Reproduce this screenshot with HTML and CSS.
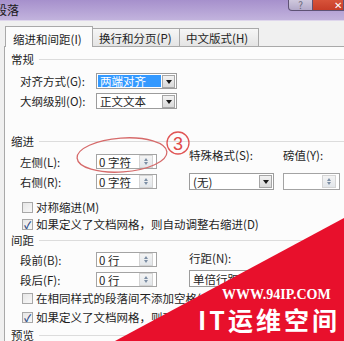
FILE: index.html
```html
<!DOCTYPE html>
<html lang="zh-CN">
<head>
    <meta charset="UTF-8">
    <title>段落</title>
    <link rel="stylesheet" href="styles.css">
</head>
<body>
  <div class="dialog">
    <div class="titlebar">
        <span class="title">段落</span>
        <div class="caption">
            <span class="cap-help">?</span>
            <span class="cap-close">✕</span>
        </div>
    </div>

    <!-- tab strip -->
    <div class="tabs">
        <div class="tab active">缩进和间距(<u>I</u>)</div>
        <div class="tab">换行和分页(<u>P</u>)</div>
        <div class="tab">中文版式(<u>H</u>)</div>
    </div>

    <div class="panel">
        <div class="group">常规</div>
        <div class="field first">
            <label>对齐方式(<u>G</u>):</label>
            <div class="select"><span class="sel-text hl">两端对齐</span><span class="drop"></span></div>
        </div>
        <div class="field">
            <label>大纲级别(<u>O</u>):</label>
            <div class="select"><span class="sel-text">正文文本</span><span class="drop"></span></div>
        </div>

        <!-- indent -->
        <div class="group g-indent">缩进</div>
        <div class="block">
            <div class="block-left">
                <div class="field">
                    <label>左侧(<u>L</u>):</label>
                    <div class="spin"><span>0 字符</span><span class="arrows"><i></i><i class="down"></i></span></div>
                </div>
                <div class="field">
                    <label>右侧(<u>R</u>):</label>
                    <div class="spin"><span>0 字符</span><span class="arrows"><i></i><i class="down"></i></span></div>
                </div>
            </div>
            <div class="block-right">
                <div class="col">
                    <label>特殊格式(<u>S</u>):</label>
                    <div class="select wide"><span class="sel-text">(无)</span><span class="drop"></span></div>
                </div>
                <div class="col col-small">
                    <label>磅值(<u>Y</u>):</label>
                    <div class="spin small"><span></span><span class="arrows"><i></i><i class="down"></i></span></div>
                </div>
            </div>
        </div>
        <div class="check c-sym"><span class="box"></span>对称缩进(<u>M</u>)</div>
        <div class="check c-tight"><span class="box on">✓</span>如果定义了文档网格，则自动调整右缩进(<u>D</u>)</div>

        <!-- spacing -->
        <div class="group g-space">间距</div>
        <div class="block b-space">
            <div class="block-left">
                <div class="field">
                    <label>段前(<u>B</u>):</label>
                    <div class="spin"><span>0 行</span><span class="arrows"><i></i><i class="down"></i></span></div>
                </div>
                <div class="field">
                    <label>段后(<u>F</u>):</label>
                    <div class="spin"><span>0 行</span><span class="arrows"><i></i><i class="down"></i></span></div>
                </div>
            </div>
            <div class="block-right">
                <div class="col">
                    <label>行距(<u>N</u>):</label>
                    <div class="select wide"><span class="sel-text">单倍行距</span><span class="drop"></span></div>
                </div>
                <div class="col col-small">
                    <label>设置值(<u>A</u>):</label>
                    <div class="spin small"><span></span><span class="arrows"><i></i><i class="down"></i></span></div>
                </div>
            </div>
        </div>
        <div class="check c-same"><span class="box"></span>在相同样式的段落间不添加空格(<u>C</u>)</div>
        <div class="check c-grid"><span class="box on">✓</span>如果定义了文档网格，则对齐到网格(<u>W</u>)</div>

        <div class="group g-preview">预览</div>
    </div>

    <!-- annotation drawn over the dialog -->
    <svg class="annot" width="344" height="341" viewBox="0 0 344 341">
        <ellipse cx="122" cy="155" rx="45" ry="17" fill="none" stroke="#d66a6a" stroke-width="1.3" transform="rotate(-4 122 155)"/>
        <circle cx="178" cy="143" r="11" fill="none" stroke="#e05454" stroke-width="1.3"/>
        <text x="178" y="150" text-anchor="middle" class="annot-num">3</text>
    </svg>

    <!-- watermark -->
    <svg class="mark" width="344" height="341" viewBox="0 0 344 341">
        <polygon points="115,341 344,218 344,341" fill="#e8102c"/>
    </svg>
    <div class="wm-url">WWW.94IP.COM</div>
    <div class="wm-name">IT运维空间</div>
  </div>
</body>
</html>
```

FILE: styles.css
```css
body {
    margin: 0;
    font-family: "Noto Sans CJK SC", "Liberation Sans", sans-serif;
    font-size: 11.5px;
    color: #1e1e1e;
    line-height: 14px;
}

u {
    text-decoration: none;
}

.dialog {
    position: relative;
    width: 344px;
    height: 341px;
    overflow: hidden;
    background-color: #f0f0f0;
}

/* title bar */
.titlebar {
    height: 20px;
    display: flex;
    align-items: flex-start;
    justify-content: space-between;
    background: linear-gradient(#a690cc, #c2b3dd);
    border-bottom: 1px solid #ded6ec;
}
.title {
    margin: 3px 0 0 -5px;
    font-size: 12px;
    color: #1a1a1a;
}
.caption {
    display: flex;
    height: 11px;
}
.cap-help, .cap-close {
    height: 11px;
    line-height: 10px;
    font-size: 10px;
    text-align: center;
    border: 1px solid #5e5275;
    border-top: none;
    box-sizing: border-box;
}
.cap-help {
    width: 25px;
    color: #6a6a7a;
    background: linear-gradient(#cfc8dd, #b3a9c9);
    border-radius: 0 0 0 4px;
}
.cap-close {
    width: 31px;
    color: #ffffff;
    text-align: right;
    padding-right: 1px;
    background: linear-gradient(#d7533a, #c73d28);
    border-left: none;
}

/* tabs */
.tabs {
    display: flex;
    align-items: flex-end;
    height: 25px;
    padding-left: 5px;
}
.tab {
    height: 18px;
    box-sizing: border-box;
    padding: 2px 7px 0 6px;
    border: 1px solid #a9a9a9;
    border-bottom: none;
    border-left: none;
    background: linear-gradient(#f6f6f6, #e4e4e4);
}
.tab.active {
    position: relative;
    z-index: 1;
    height: 21px;
    margin-bottom: -1px;
    width: 88px;
    padding: 5px 0 0 7px;
    border-left: 1px solid #a9a9a9;
    background: #fcfcfc;
}
.tab:nth-child(2) {
    width: 87px;
}
.tab:nth-child(3) {
    width: 79px;
}

/* panel */
.panel {
    border-top: 1px solid #a9a9a9;
    border-left: 1px solid #a9a9a9;
    margin-left: 4px;
    background: #fcfcfc;
    padding-left: 6px;
    height: 300px;
}

.group {
    display: flex;
    align-items: center;
    height: 14px;
    margin-top: 5px;
}
.group::after {
    content: "";
    flex: 1;
    height: 1px;
    margin-left: 5px;
    background: #dcdcdc;
}
.g-indent {
    margin-top: 25px;
}
.g-space {
    margin-top: 2px;
}
.g-preview {
    margin-top: 4px;
}

.field {
    display: flex;
    align-items: center;
    margin-left: 9px;
    margin-top: 4px;
    height: 16px;
}
.field.first {
    margin-top: 7px;
}
.field label {
    width: 76px;
}

.select {
    display: flex;
    align-items: center;
    width: 81px;
    height: 16px;
    box-sizing: border-box;
    border: 1px solid #9c9c9c;
    background: #ffffff;
    padding: 1px;
}
.select.wide {
    width: 85px;
    height: 17px;
}
.sel-text {
    flex: 1;
    padding-left: 2px;
    height: 12px;
    line-height: 12px;
}
.sel-text.hl {
    background: #3399ff;
    color: #ffffff;
    margin-right: 1px;
}
.drop {
    width: 13px;
    height: 13px;
    box-sizing: border-box;
    border: 1px solid #a6a6a6;
    background: linear-gradient(#f2f2f2, #d9d9d9);
    position: relative;
}
.drop::after {
    content: "";
    position: absolute;
    left: 3px;
    top: 4px;
    border-left: 3px solid transparent;
    border-right: 3px solid transparent;
    border-top: 4px solid #1a1a1a;
}

.spin {
    display: flex;
    align-items: center;
    width: 61px;
    height: 15px;
    box-sizing: border-box;
    border: 1px solid #a4a4a4;
    background: #ffffff;
    padding-left: 2px;
}
.spin.small {
    width: 57px;
    height: 17px;
}
.spin span:first-child {
    flex: 1;
}
.arrows {
    display: flex;
    flex-direction: column;
    justify-content: center;
    gap: 1px;
    width: 12px;
    height: 11px;
    margin-right: 3px;
    background: linear-gradient(#f4f4f4, #e2e6ea);
    border: 1px solid #d4d4d4;
    align-items: center;
}
.arrows i {
    display: block;
    border-left: 2px solid transparent;
    border-right: 2px solid transparent;
    border-bottom: 3px solid #7c8ea4;
}
.arrows i.down {
    border-bottom: none;
    border-top: 3px solid #7c8ea4;
}

/* two-column control blocks */
.block {
    display: flex;
    height: 42px;
}
.block-left {
    width: 169px;
    margin-left: 9px;
    padding-top: 2px;
}
.block-left .field {
    margin-left: 0;
    margin-top: 4px;
    height: 15px;
}
.block-left .field + .field {
    margin-top: 5px;
}
.block-right {
    display: flex;
}
.col {
    display: flex;
    flex-direction: column;
    width: 94px;
}
.col label {
    height: 14px;
    margin-bottom: 11px;
}
.col-small {
    width: 57px;
}
.b-space {
    height: 40px;
}
.b-space .block-left {
    padding-top: 1px;
}
.b-space .col label {
    margin-top: 4px;
    margin-bottom: 5px;
}

/* checkboxes */
.check {
    display: flex;
    align-items: center;
    height: 14px;
    margin-left: 11px;
    margin-top: 3px;
}
.box {
    width: 11px;
    height: 11px;
    box-sizing: border-box;
    border: 1px solid #a8a8a8;
    background: linear-gradient(135deg, #e6e6e6, #f8f8f8);
    margin-right: 3px;
    font-size: 10px;
    line-height: 9px;
    text-align: center;
    color: #2c4a86;
    font-weight: bold;
}
.c-sym {
    margin-top: 10px;
}
.c-same {
    margin-top: 4px;
}
.c-grid {
    margin-top: 5px;
}

/* overlays */
.annot, .mark {
    position: absolute;
    left: 0;
    top: 0;
}
.annot-num {
    font-family: "Liberation Sans", sans-serif;
    font-size: 18px;
    fill: #e04848;
}
.wm-url {
    position: absolute;
    left: 222px;
    top: 288px;
    font-family: "Liberation Serif", serif;
    font-weight: bold;
    font-size: 14px;
    color: #ffffff;
}
.wm-name {
    position: absolute;
    left: 198px;
    top: 303px;
    font-weight: bold;
    font-size: 25px;
    line-height: 32px;
    letter-spacing: 3px;
    color: #ffffff;
}
```
